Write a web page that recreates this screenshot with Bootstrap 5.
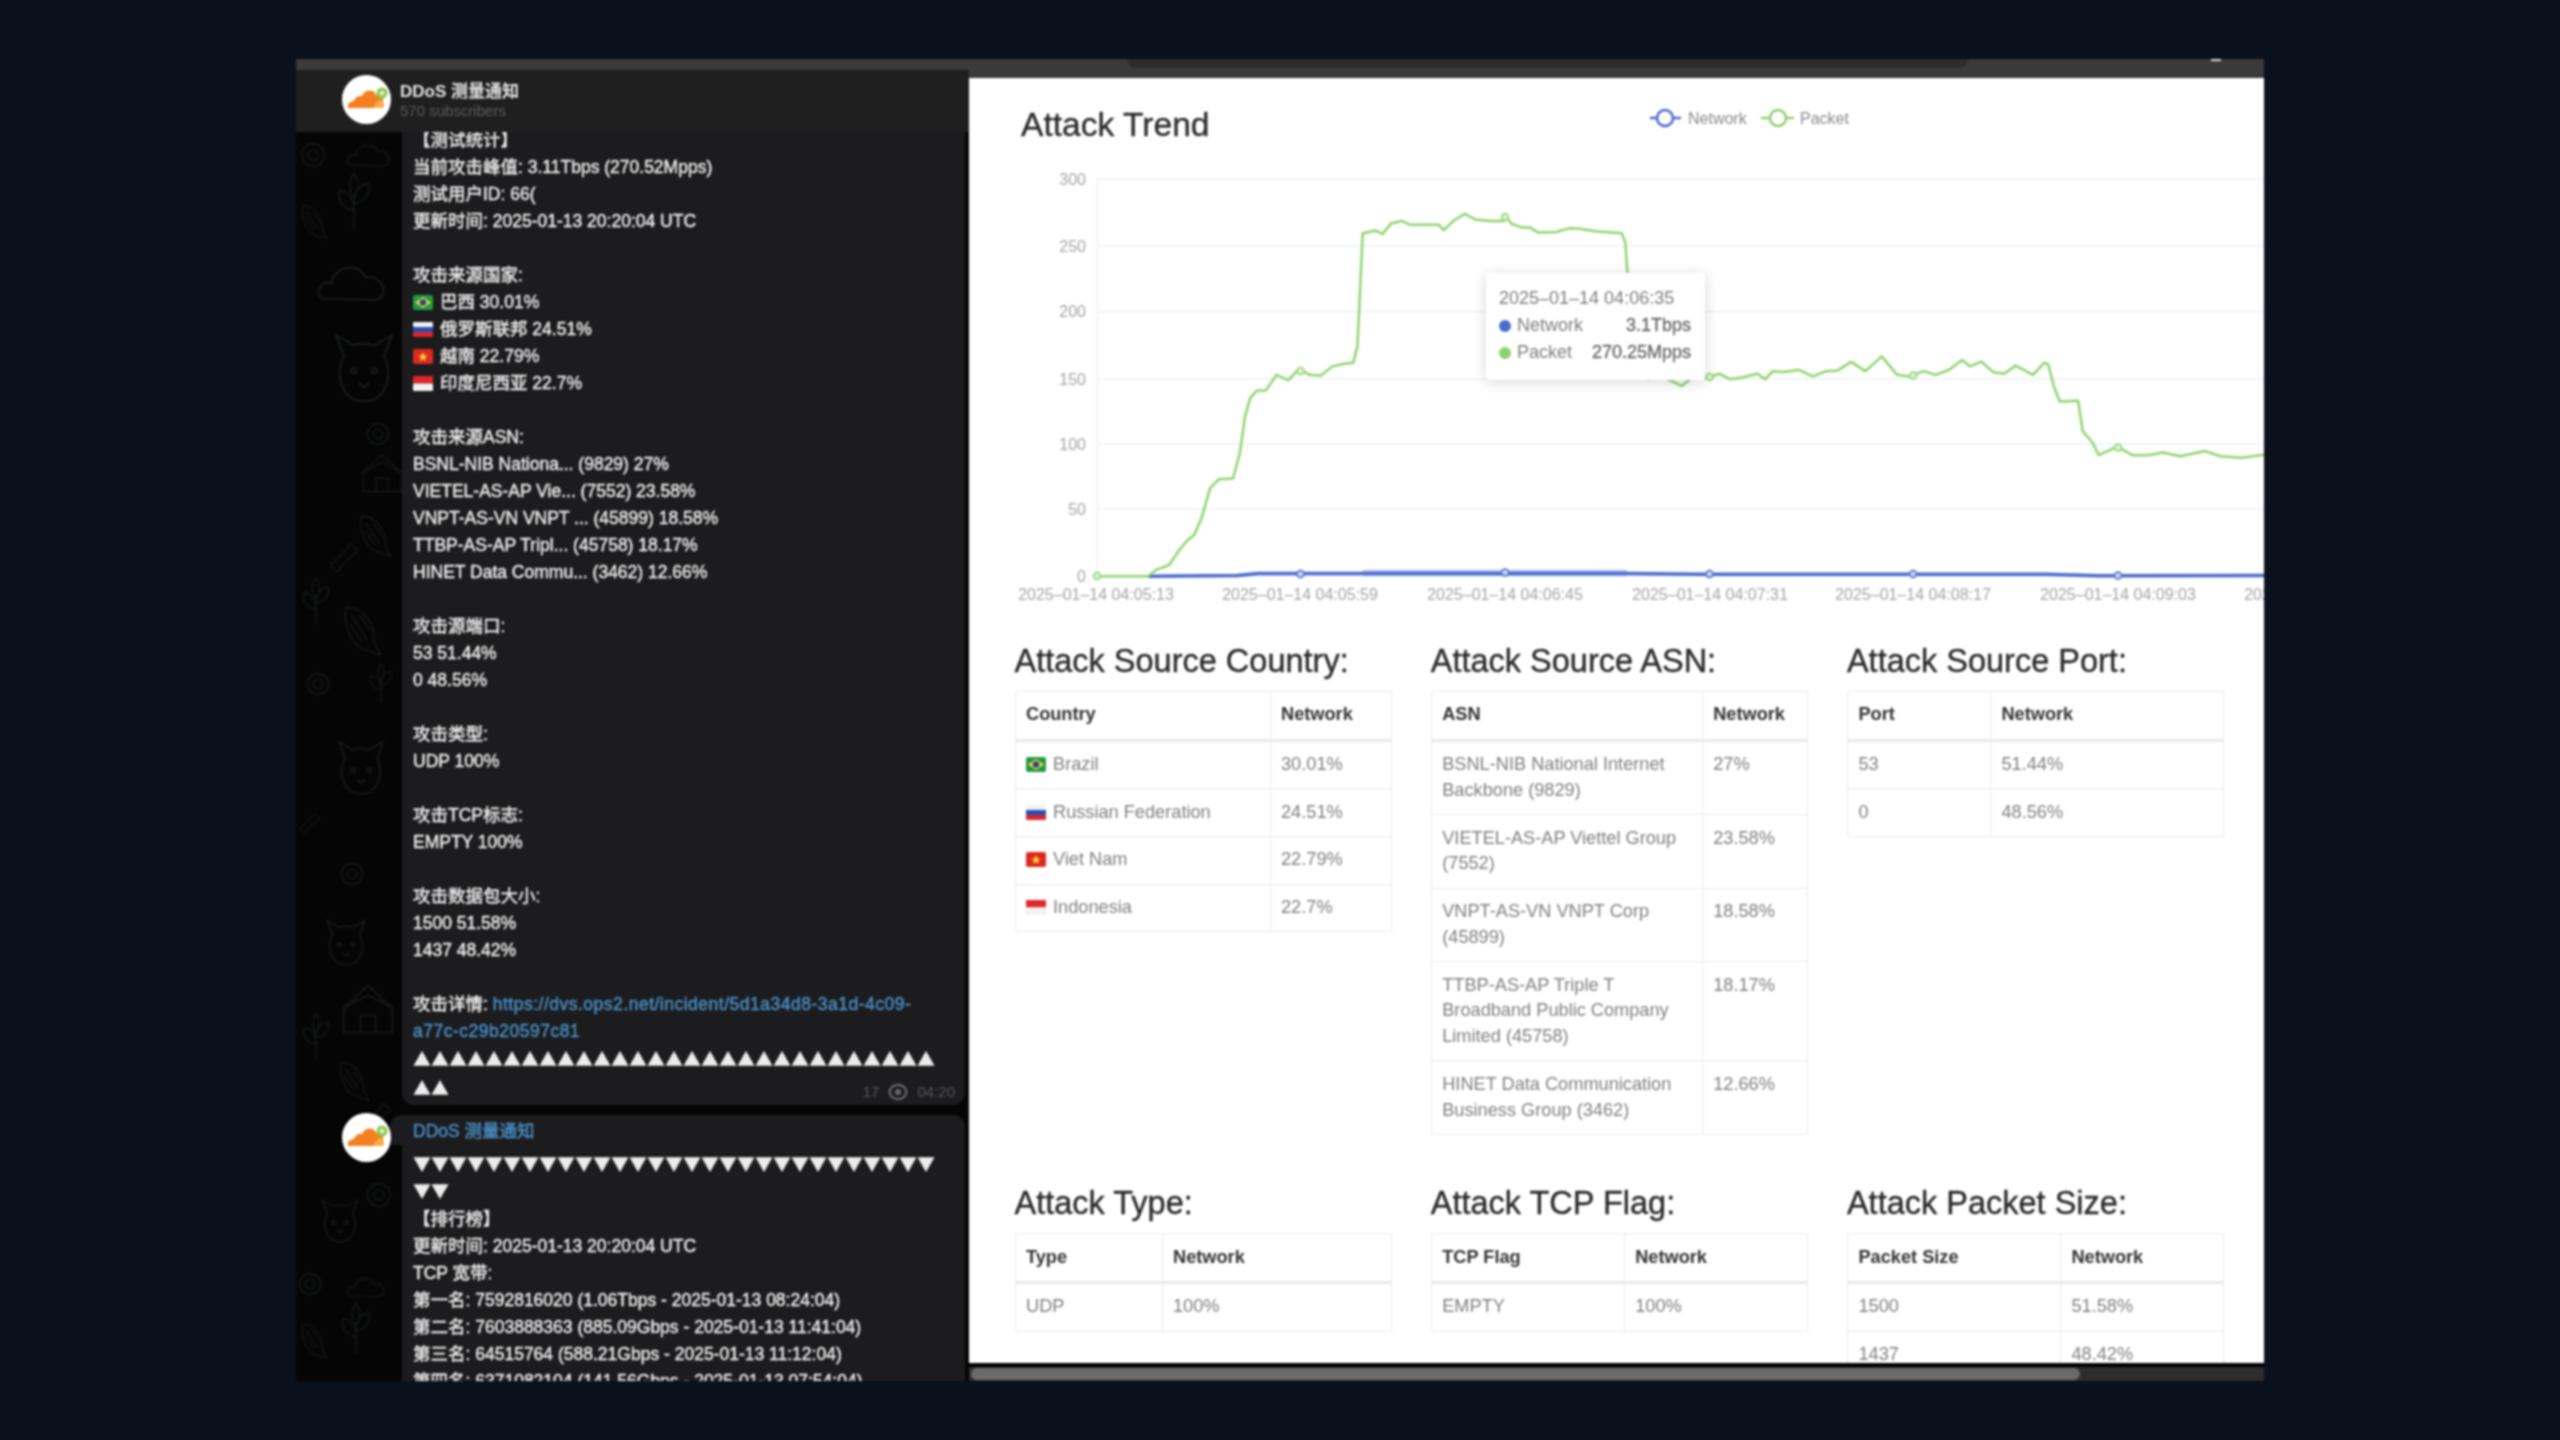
<!DOCTYPE html>
<html lang="en">
<head>
<meta charset="utf-8">
<title>DDoS report</title>
<link href="https://cdn.jsdelivr.net/npm/bootstrap@5.3.0/dist/css/bootstrap.min.css" rel="stylesheet">
<style>
html,body{height:100%;background:#0a111c;overflow:hidden}
body{font-family:"Liberation Sans","Noto Sans CJK SC",sans-serif}
.shot{width:1968px;height:1322px;margin:59px 0 0 296px;overflow:hidden;filter:blur(1px)}
.tg{width:673px;background:#050505;overflow:hidden}
.tg-band{height:11px;background:#3b3b3b}
.tg-head{height:62px;background:#1f1f20;z-index:2;padding-left:46px;gap:9px}
.ava{width:49px;height:49px;flex:none}
.tg-head .ava{margin-top:-3px}
.ch-name{font-size:17px;line-height:20px;font-weight:700;color:#e6e6e6}
.ch-sub{font-size:15px;line-height:18px;color:#5c5c5c}
.chat{flex:1 1 auto;min-height:0}
.wall{left:0;top:0;width:110px;height:1250px}
.wall *{fill:none;stroke:#181e19;stroke-width:1.5}
.bubble{margin-left:106px;margin-right:4px;background:#1c1c1e;padding:0 9px 2px 11px;color:#ececec;font-size:17.5px;line-height:27px;-webkit-text-stroke:.45px #ececec}
.b1{margin-top:-5.5px;border-radius:0 0 12px 12px}
.b2{margin-top:10px;padding-top:3px;border-radius:12px 12px 0 0}
.b2::before{content:"";position:absolute;left:-12px;top:0;width:24px;height:30px;background:#1c1c1e;border-radius:12px 0 0 0}
.bubble p{margin:0 0 27px}
.name,.bubble a{color:#4a90c8;-webkit-text-stroke-color:#4a90c8;text-decoration:none}
.bubble a{letter-spacing:.5px}
.name{margin-bottom:5.5px}
.tri{font-family:"Noto Sans CJK SC",sans-serif;font-size:18px;white-space:nowrap;-webkit-text-stroke:0}
div.tri{margin-bottom:1.5px}
.flag{width:20px;height:15px;margin-right:7px;vertical-align:-2px}
.meta{right:10px;bottom:4px;gap:9px;font-size:15px;line-height:18px;color:#565656;-webkit-text-stroke:0}
.av2{left:46px;top:980.5px;z-index:1}
.pane{flex:1 1 auto;min-width:0;background:#fff}
.pane-top{height:19px;background:#3a3a3a;flex:none}
.url{left:158px;top:0;width:841px;height:9px;background:#2c2c2c;border-radius:0 0 10px 10px}
.dash{left:1242px;top:0;width:10px;height:2px;background:#ddd}
.pane-body{flex:1 1 auto;min-height:0;overflow:hidden;background:#fff}
.chart{display:block;width:1295px;height:563.5px}
.chart text{font-family:"Liberation Sans",sans-serif;font-size:16px;fill:#a4a4a4}
.chart .ttl{font-size:33.6px;fill:#2b2b2b;stroke:#2b2b2b;stroke-width:.35}
.chart .lg{fill:#8a8a8a}
.tip{left:517px;top:195px;width:219px;height:107px;background:#fff;box-shadow:0 2px 14px rgba(0,0,0,.16);padding:12px 14px 0 13px;font-size:18px;line-height:27px;color:#7e7e7e;border-radius:3px}
.tip b{font-weight:400;color:#666;-webkit-text-stroke:.3px #666}
.dot{width:12px;height:12px;margin-right:6px;flex:none}
.d-net{background:#4a6bd0}.d-pkt{background:#8fd070}
.stats{padding-left:45.5px;width:1255px}
.stats .row{--bs-gutter-x:39.2px}
.top-row{margin-bottom:49px}
h3.st{font-size:32.5px;line-height:39px;font-weight:400;color:#2a2a2a;margin:0 0 10.5px;-webkit-text-stroke:.35px #2a2a2a;white-space:nowrap}
.stat{table-layout:fixed;margin:0;font-size:18.2px;line-height:25.8px;--bs-table-bg:transparent;border-color:#ebebeb;width:377px}
.stat th,.stat td{padding:10.45px 10.5px;border:1px solid #ebebeb;vertical-align:top}
.stat th{color:#333;font-weight:700;height:48px;border-bottom:3px solid #e9e9e9}
.stat td{color:#808080}
.w143{width:143px}.w147{width:147px}.w193{width:193px}.w213{width:213px}.w255{width:255px}.w271{width:271px}
.sep{height:4px;background:#000;flex:none}
.track{height:14px;background:#2d2d2d;flex:none;padding:1px 0 1px 2px}
.thumb{width:1109px;height:12px;background:#6a6a6a;border-radius:6px}
</style>
</head>
<body>
<svg width="0" height="0" class="position-absolute">
<defs>
<symbol id="f-br" viewBox="0 0 20 15"><rect width="20" height="15" rx="2" fill="#1f9a45"/><path d="M10 2 18 7.500 10 13 2 7.500Z" fill="#f2d53c"/><circle cx="10" cy="7.500" r="3.300" fill="#23478f"/></symbol>
<symbol id="f-ru" viewBox="0 0 20 15"><rect width="20" height="5" rx="1" fill="#f1f1f1"/><rect y="5" width="20" height="5" fill="#2a4fb0"/><rect y="10" width="20" height="5" rx="1" fill="#d8262c"/></symbol>
<symbol id="f-vn" viewBox="0 0 20 15"><rect width="20" height="15" rx="2" fill="#dc2a20"/><path d="M10 3 11.200 6.400H14.800L11.900 8.500 13 12 10 9.900 7 12 8.100 8.500 5.200 6.400H8.800Z" fill="#ffdc2e"/></symbol>
<symbol id="f-id" viewBox="0 0 20 15"><rect width="20" height="7.500" rx="1" fill="#e0262c"/><rect y="7.500" width="20" height="7.500" rx="1" fill="#f3f3f3"/></symbol>
<symbol id="cf" viewBox="0 0 49 49"><circle cx="24.500" cy="24.500" r="24.500" fill="#fff"/><path d="M6 33C5 29 8 26 12 26 13 22 17 20 20 21 23 14 32 14 34 20 39 19 42 23 41 27 42 29 42 31 41 33Z" fill="#f38020"/><path d="M31 33C33 29 35 26 38 25 41 26 42 30 41 33Z" fill="#f9ad4b"/><circle cx="40" cy="18" r="5.500" fill="#8cc84b"/><circle cx="40" cy="18" r="2.500" fill="#d8efc0"/></symbol>
<symbol id="d-cloud" viewBox="0 0 60 40" overflow="visible"><path d="M6 32C-2 30 2 18 12 20 14 6 34 4 38 16 50 12 58 30 46 33Z"/></symbol>
<symbol id="d-cat" viewBox="0 0 60 70" overflow="visible"><path d="M8 10 14 26C6 44 14 62 30 62 46 62 54 44 46 26L52 10 38 18C32 16 26 16 22 18Z"/><circle cx="22" cy="38" r="2"/><circle cx="38" cy="38" r="2"/><path d="M26 48 30 51 34 48"/></symbol>
<symbol id="d-fish" viewBox="0 0 50 70" overflow="visible"><path d="M8 6C28 6 42 26 40 46L48 62 30 56C12 50 4 24 8 6Z"/><path d="M14 16 32 44M24 16 36 34M12 26 26 46"/></symbol>
<symbol id="d-house" viewBox="0 0 60 60" overflow="visible"><path d="M4 28 30 4 56 28V54H4Z"/><path d="M22 54V36H38V54"/><path d="M4 28 30 14 56 28"/></symbol>
<symbol id="d-bone" viewBox="0 0 50 50" overflow="visible"><path d="M8 36C2 36 2 28 8 28L28 8C28 2 36 2 36 8 42 8 42 16 36 16L16 36C16 42 8 42 8 36Z"/></symbol>
<symbol id="d-ring" viewBox="0 0 30 30" overflow="visible"><circle cx="15" cy="15" r="13"/><circle cx="15" cy="15" r="6"/></symbol>
<symbol id="d-plant" viewBox="0 0 50 70" overflow="visible"><path d="M25 66V30M25 44C10 44 6 30 8 22 18 22 25 32 25 44ZM25 36C40 36 44 22 42 14 32 14 25 24 25 36ZM25 30C18 20 20 8 25 2 30 8 32 20 25 30Z"/></symbol>
</defs>
</svg>

<div class="shot d-flex">
  <section class="tg d-flex flex-column">
    <div class="tg-band flex-shrink-0"></div>
    <header class="tg-head d-flex align-items-center position-relative flex-shrink-0">
      <svg class="ava"><use href="#cf"/></svg>
      <div>
        <div class="ch-name">DDoS 测量通知</div>
        <div class="ch-sub">570 subscribers</div>
      </div>
    </header>
    <div class="chat position-relative">
      <svg class="wall position-absolute" viewBox="0 0 110 1250">
        <use href="#d-ring" x="4" y="10" width="26" height="26"/><use href="#d-cloud" x="50" y="6" width="50" height="34"/>
        <use href="#d-plant" x="36" y="40" width="44" height="60"/><use href="#d-fish" x="2" y="60" width="30" height="62"/>
        <use href="#d-cloud" x="20" y="118" width="78" height="66"/><use href="#d-cat" x="30" y="190" width="76" height="90"/>
        <use href="#d-ring" x="70" y="290" width="24" height="24"/><use href="#d-house" x="64" y="320" width="44" height="44"/>
        <use href="#d-fish" x="60" y="370" width="36" height="70"/><use href="#d-bone" x="30" y="410" width="40" height="36"/>
        <use href="#d-plant" x="2" y="440" width="36" height="60"/><use href="#d-fish" x="40" y="470" width="50" height="60"/>
        <use href="#d-ring" x="10" y="540" width="24" height="24"/><use href="#d-plant" x="70" y="530" width="30" height="44"/>
        <use href="#d-cat" x="30" y="600" width="70" height="70"/><use href="#d-bone" x="2" y="680" width="26" height="26"/>
        <use href="#d-ring" x="44" y="730" width="24" height="24"/><use href="#d-cat" x="20" y="780" width="60" height="60"/>
        <use href="#d-house" x="44" y="850" width="56" height="56"/><use href="#d-plant" x="2" y="880" width="36" height="50"/>
        <use href="#d-fish" x="40" y="920" width="34" height="60"/><use href="#d-bone" x="66" y="970" width="34" height="34"/>
        <use href="#d-ring" x="70" y="1050" width="26" height="26"/><use href="#d-cat" x="14" y="1060" width="60" height="56"/>
        <use href="#d-cloud" x="50" y="1140" width="44" height="30"/><use href="#d-ring" x="2" y="1140" width="24" height="24"/>
        <use href="#d-plant" x="40" y="1170" width="40" height="54"/><use href="#d-fish" x="2" y="1180" width="30" height="60"/>
      </svg>

      <article class="bubble b1 position-relative">
        <p>【测试统计】<br>当前攻击峰值: 3.11Tbps (270.52Mpps)<br>测试用户ID: 66(<br>更新时间: 2025-01-13 20:20:04 UTC</p>
        <p>攻击来源国家:<br>
        <svg class="flag"><use href="#f-br"/></svg>巴西 30.01%<br>
        <svg class="flag"><use href="#f-ru"/></svg>俄罗斯联邦 24.51%<br>
        <svg class="flag"><use href="#f-vn"/></svg>越南 22.79%<br>
        <svg class="flag"><use href="#f-id"/></svg>印度尼西亚 22.7%</p>
        <p>攻击来源ASN:<br>BSNL-NIB Nationa... (9829) 27%<br>VIETEL-AS-AP Vie... (7552) 23.58%<br>VNPT-AS-VN VNPT ... (45899) 18.58%<br>TTBP-AS-AP Tripl... (45758) 18.17%<br>HINET Data Commu... (3462) 12.66%</p>
        <p>攻击源端口:<br>53 51.44%<br>0 48.56%</p>
        <p>攻击类型:<br>UDP 100%</p>
        <p>攻击TCP标志:<br>EMPTY 100%</p>
        <p>攻击数据包大小:<br>1500 51.58%<br>1437 48.42%</p>
        <p class="mb-0">攻击详情: <a href="#">https://dvs.ops2.net/incident/5d1a34d8-3a1d-4c09-<br>a77c-c29b20597c81</a><br><span class="tri">▲▲▲▲▲▲▲▲▲▲▲▲▲▲▲▲▲▲▲▲▲▲▲▲▲▲▲▲▲<br>▲▲</span></p>
        <div class="meta position-absolute d-flex align-items-center"><span>17</span>
          <svg width="20" height="18" viewBox="0 0 18 16"><ellipse cx="9" cy="8" rx="7.500" ry="6.500" fill="none" stroke="#666" stroke-width="2"/><circle cx="9" cy="8" r="2.800" fill="#666"/></svg>
          <span>04:20</span></div>
      </article>

      <svg class="ava av2 position-absolute"><use href="#cf"/></svg>
      <article class="bubble b2 position-relative">
        <div class="name">DDoS 测量通知</div>
        <div class="tri">▼▼▼▼▼▼▼▼▼▼▼▼▼▼▼▼▼▼▼▼▼▼▼▼▼▼▼▼▼<br>▼▼</div>
        【排行榜】<br>更新时间: 2025-01-13 20:20:04 UTC<br>TCP 宽带:<br>第一名: 7592816020 (1.06Tbps - 2025-01-13 08:24:04)<br>第二名: 7603888363 (885.09Gbps - 2025-01-13 11:41:04)<br>第三名: 64515764 (588.21Gbps - 2025-01-13 11:12:04)<br>第四名: 6371082104 (141.56Gbps - 2025-01-13 07:54:04)
      </article>
    </div>
  </section>

  <section class="pane d-flex flex-column">
    <div class="pane-top position-relative"><div class="url position-absolute"></div><div class="dash position-absolute"></div></div>
    <div class="pane-body">
      <div class="position-relative">
        <svg class="chart" viewBox="969 78 1295 563.500">
          <g stroke="#eceff5" stroke-width="1.500">
            <path d="M1097 179H2264M1097 246H2264M1097 311.500H2264M1097 379H2264M1097 444H2264M1097 509H2264M1097 576H2264M1097.500 179V576"/>
          </g>
          <text class="ttl" x="1021" y="136">Attack Trend</text>
          <path d="M1650 118H1681" stroke="#4a6bd0" stroke-width="2.500"/><circle cx="1665" cy="118" r="8" fill="#fff" stroke="#4a6bd0" stroke-width="2.500"/>
          <text class="lg" x="1688" y="123.500">Network</text>
          <path d="M1761 118H1794" stroke="#8fd070" stroke-width="2.500"/><circle cx="1778" cy="118" r="8" fill="#fff" stroke="#8fd070" stroke-width="2.500"/>
          <text class="lg" x="1800" y="123.500">Packet</text>
          <g text-anchor="end">
            <text x="1086" y="185">300</text><text x="1086" y="252">250</text><text x="1086" y="317">200</text><text x="1086" y="385">150</text><text x="1086" y="450">100</text><text x="1086" y="515">50</text><text x="1086" y="582">0</text>
          </g>
          <g text-anchor="middle">
            <text x="1096" y="600">2025–01–14 04:05:13</text><text x="1300" y="600">2025–01–14 04:05:59</text><text x="1505" y="600">2025–01–14 04:06:45</text><text x="1710" y="600">2025–01–14 04:07:31</text><text x="1913" y="600">2025–01–14 04:08:17</text><text x="2118" y="600">2025–01–14 04:09:03</text><text x="2322" y="600">2025–01–14 04:09:49</text>
          </g>
          <g transform="translate(960 50) scale(.523 .37)" fill="none" stroke-linejoin="round">
            <polygon points="770,1405 1275,1405 1275,1422 770,1422" fill="#bac5ea"/>
            <polyline vector-effect="non-scaling-stroke" stroke="#4a6bd0" stroke-width="3.500" points="360,1422 530,1420 570,1415 765,1415 1275,1415 1415,1417"/>
            <polyline vector-effect="non-scaling-stroke" stroke="#8fd470" stroke-width="2.500" points="262,1422 360,1422 375,1405 400,1392 420,1350 435,1325 448,1310 462,1265 478,1185 495,1160 522,1158 535,1090 545,990 555,940 568,920 585,920 605,878 628,892 648,862 668,878 690,880 712,855 735,848 752,845 760,800 770,495 795,488 808,497 825,468 845,462 860,472 915,472 925,487 945,460 965,443 985,458 1015,462 1040,462 1045,452 1055,470 1075,480 1090,480 1105,493 1140,492 1165,482 1185,483 1215,490 1265,495 1272,520 1276,600 1290,800 1315,890 1345,885 1380,908 1400,885 1415,885"/>
          </g>
          <g transform="translate(1700 50) scale(.3827 .37)" fill="none" stroke-linejoin="round">
            <polyline vector-effect="non-scaling-stroke" stroke="#4a6bd0" stroke-width="3.500" points="0,1417 905,1417 1040,1421 1480,1420"/>
            <polyline vector-effect="non-scaling-stroke" stroke="#8fd470" stroke-width="2.500" points="0,885 25,885 50,875 80,890 110,885 150,875 170,890 190,868 215,870 260,865 295,882 330,868 360,866 395,843 432,868 475,828 515,878 545,882 585,868 615,878 650,865 685,838 705,855 735,842 765,870 795,875 825,853 870,878 900,845 910,850 925,910 940,950 988,948 1000,1030 1025,1060 1042,1095 1090,1072 1130,1095 1170,1095 1210,1088 1255,1098 1320,1084 1360,1098 1415,1102 1480,1093"/>
          </g>
          <g fill="#dff3d4" stroke="#8fd470" stroke-width="1.500">
            <circle cx="1097" cy="576" r="3.500"/><circle cx="1300.500" cy="371" r="3.500"/><circle cx="1505" cy="217" r="3.500"/><circle cx="1709.500" cy="377" r="3.500"/><circle cx="1913" cy="375.500" r="3.500"/><circle cx="2118" cy="447.500" r="3.500"/>
          </g>
          <g fill="#c9d2f0" stroke="#4a6bd0" stroke-width="1.500">
            <circle cx="1300.500" cy="574" r="3.500"/><circle cx="1505" cy="572.500" r="3.500"/><circle cx="1709.500" cy="574" r="3.500"/><circle cx="1913" cy="574" r="3.500"/><circle cx="2118" cy="575.500" r="3.500"/>
          </g>
        </svg>
        <div class="tip position-absolute">
          <div>2025–01–14 04:06:35</div>
          <div class="d-flex align-items-center"><span class="dot d-net rounded-circle"></span><span>Network</span><b class="ms-auto">3.1Tbps</b></div>
          <div class="d-flex align-items-center"><span class="dot d-pkt rounded-circle"></span><span>Packet</span><b class="ms-auto">270.25Mpps</b></div>
        </div>
      </div>

      <div class="stats">
        <div class="row top-row">
          <div class="col-4">
            <h3 class="st">Attack Source Country:</h3>
            <table class="table table-bordered stat">
              <thead><tr><th class="w255">Country</th><th>Network</th></tr></thead>
              <tbody>
                <tr><td><svg class="flag"><use href="#f-br"/></svg>Brazil</td><td>30.01%</td></tr>
                <tr><td><svg class="flag"><use href="#f-ru"/></svg>Russian Federation</td><td>24.51%</td></tr>
                <tr><td><svg class="flag"><use href="#f-vn"/></svg>Viet Nam</td><td>22.79%</td></tr>
                <tr><td><svg class="flag"><use href="#f-id"/></svg>Indonesia</td><td>22.7%</td></tr>
              </tbody>
            </table>
          </div>
          <div class="col-4">
            <h3 class="st">Attack Source ASN:</h3>
            <table class="table table-bordered stat">
              <thead><tr><th class="w271">ASN</th><th>Network</th></tr></thead>
              <tbody>
                <tr><td>BSNL-NIB National Internet Backbone (9829)</td><td>27%</td></tr>
                <tr><td>VIETEL-AS-AP Viettel Group (7552)</td><td>23.58%</td></tr>
                <tr><td>VNPT-AS-VN VNPT Corp (45899)</td><td>18.58%</td></tr>
                <tr><td>TTBP-AS-AP Triple T Broadband Public Company Limited (45758)</td><td>18.17%</td></tr>
                <tr><td>HINET Data Communication Business Group (3462)</td><td>12.66%</td></tr>
              </tbody>
            </table>
          </div>
          <div class="col-4">
            <h3 class="st">Attack Source Port:</h3>
            <table class="table table-bordered stat">
              <thead><tr><th class="w143">Port</th><th>Network</th></tr></thead>
              <tbody>
                <tr><td>53</td><td>51.44%</td></tr>
                <tr><td>0</td><td>48.56%</td></tr>
              </tbody>
            </table>
          </div>
        </div>
        <div class="row">
          <div class="col-4">
            <h3 class="st">Attack Type:</h3>
            <table class="table table-bordered stat">
              <thead><tr><th class="w147">Type</th><th>Network</th></tr></thead>
              <tbody><tr><td>UDP</td><td>100%</td></tr></tbody>
            </table>
          </div>
          <div class="col-4">
            <h3 class="st">Attack TCP Flag:</h3>
            <table class="table table-bordered stat">
              <thead><tr><th class="w193">TCP Flag</th><th>Network</th></tr></thead>
              <tbody><tr><td>EMPTY</td><td>100%</td></tr></tbody>
            </table>
          </div>
          <div class="col-4">
            <h3 class="st">Attack Packet Size:</h3>
            <table class="table table-bordered stat">
              <thead><tr><th class="w213">Packet Size</th><th>Network</th></tr></thead>
              <tbody><tr><td>1500</td><td>51.58%</td></tr><tr><td>1437</td><td>48.42%</td></tr></tbody>
            </table>
          </div>
        </div>
      </div>
    </div>
    <div class="sep"></div>
    <div class="track"><div class="thumb"></div></div>
  </section>
</div>
<script src="https://cdn.jsdelivr.net/npm/bootstrap@5.3.0/dist/js/bootstrap.bundle.min.js"></script>
</body>
</html>
